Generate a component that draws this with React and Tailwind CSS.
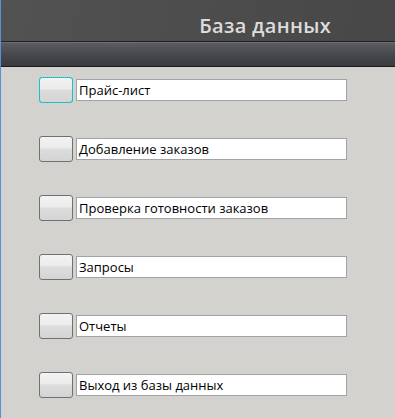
import React from "react";

const items = [
  "Прайс-лист",
  "Добавление заказов",
  "Проверка готовности заказов",
  "Запросы",
  "Отчеты",
  "Выход из базы данных",
];

const MenuRow = ({ label, focused }) => (
  <div className="flex items-start h-[59px] pl-[38px]">
    <button
      type="button"
      className={`w-[34px] h-[26px] rounded-[3px] border bg-[linear-gradient(#f3f3f3_0%,#ebebeb_45%,#dddddd_50%,#d4d4d4_100%)] ${
        focused ? "border-[#1aa3c9] outline-1 outline-dotted outline-[#1ce0d0] -outline-offset-1" : "border-[#707070]"
      }`}
    ></button>
    <div className="ml-[3px] mt-[2px] w-[271px] h-[22px] bg-white border border-[#a0a3a8] flex items-center pl-[2px] text-[13px] text-black font-['Open_Sans',sans-serif] leading-none">
      {label}
    </div>
  </div>
);

export default function App() {
  return (
    <div className="w-[395px] h-[418px] bg-[#d4d2cf] border-l border-[#5b8fd8] overflow-hidden">
      {/* Title bar */}
      <div className="h-[41px] bg-[linear-gradient(100deg,#525252,#474747)] flex items-center justify-end pr-[64px] pt-[11px]">
        <span className="text-[20px] font-semibold tracking-[0.3px] text-[#dcdcdc] font-['Open_Sans',sans-serif] leading-none">
          База данных
        </span>
      </div>
      <div className="h-px bg-[#1e1f22]"></div>
      <div className="h-[24px] bg-[linear-gradient(#5a5c60,#47484b_50%,#3a3b3e)] border-t border-[#6d7075]"></div>
      <div className="h-px bg-[#1b1c1f]"></div>
      <div className="pt-[10px]">
        {items.map((label, i) => (
          <MenuRow key={label} label={label} focused={i === 0} />
        ))}
      </div>
    </div>
  );
}
